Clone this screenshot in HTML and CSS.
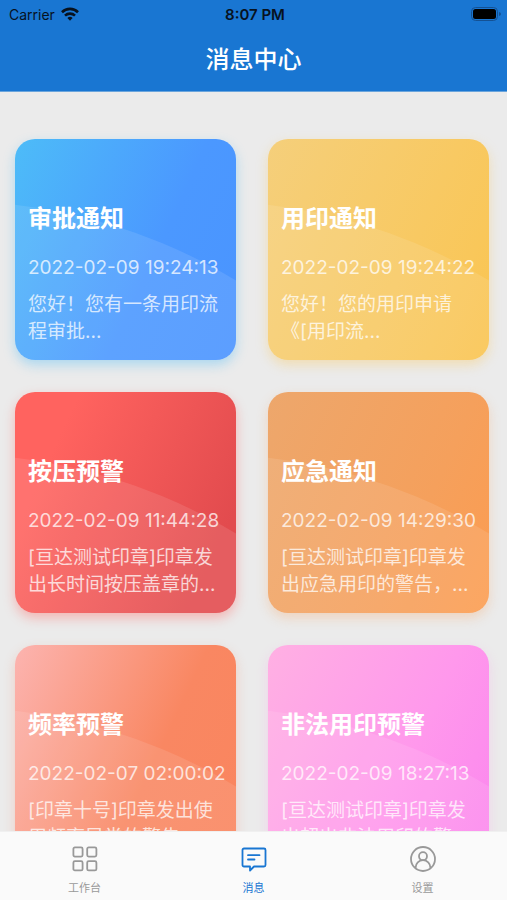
FILE: index.html
```html
<!DOCTYPE html>
<html lang="zh-CN">
<head>
    <meta charset="UTF-8">
    <meta name="viewport" content="width=device-width, initial-scale=1.0">
    <title>消息中心</title>
    <link rel="stylesheet" href="styles.css">
</head>
<body>
    <header class="header">
        <div class="status-bar">
            <div class="carrier">
                <span>Carrier</span>
                <svg class="wifi" viewBox="0 0 18 14" fill="none" stroke="#07121f" stroke-width="2.6">
                    <path d="M1 5.2a11.4 11.4 0 0 1 16 0"/>
                    <path d="M4 8.6a7.2 7.2 0 0 1 10 0"/>
                    <path d="M6.4 10.9a3.8 3.8 0 0 1 5.2 0L9 13.8z" fill="#07121f" stroke="none"/>
                </svg>
            </div>
            <time class="clock">8:07 PM</time>
            <svg class="battery" viewBox="0 0 30 14">
                <rect x="0.5" y="0.5" width="26" height="13" rx="4" fill="none" stroke="#145193"/>
                <rect x="2" y="2" width="23" height="10" rx="2.5" fill="#000"/>
                <path d="M28 5v4q2-.6 2-2t-2-2z" fill="#145193"/>
            </svg>
        </div>
        <h1 class="page-title">消息中心</h1>
    </header>

    <main class="content">
        <div class="card-grid">
            <a href="#" class="card card-blue">
                <h2 class="card-title">审批通知</h2>
                <time class="card-date">2022-02-09 19:24:13</time>
                <p class="card-text">您好！您有一条用印流程审批...</p>
            </a>
            <a href="#" class="card card-yellow">
                <h2 class="card-title">用印通知</h2>
                <time class="card-date">2022-02-09 19:24:22</time>
                <p class="card-text">您好！您的用印申请《[用印流...</p>
            </a>
            <a href="#" class="card card-red">
                <h2 class="card-title">按压预警</h2>
                <time class="card-date">2022-02-09 11:44:28</time>
                <p class="card-text">[亘达测试印章]印章发出长时间按压盖章的...</p>
            </a>
            <a href="#" class="card card-orange">
                <h2 class="card-title">应急通知</h2>
                <time class="card-date">2022-02-09 14:29:30</time>
                <p class="card-text">[亘达测试印章]印章发出应急用印的警告，...</p>
            </a>
            <a href="#" class="card card-coral">
                <h2 class="card-title">频率预警</h2>
                <time class="card-date">2022-02-07 02:00:02</time>
                <p class="card-text">[印章十号]印章发出使用频率异常的警告...</p>
            </a>
            <a href="#" class="card card-pink">
                <h2 class="card-title">非法用印预警</h2>
                <time class="card-date">2022-02-09 18:27:13</time>
                <p class="card-text">[亘达测试印章]印章发出超出非法用印的警...</p>
            </a>
        </div>
    </main>

    <nav class="tab-bar">
        <a href="#" class="tab">
            <svg class="tab-icon" viewBox="0 0 26 26" fill="none" stroke="currentColor" stroke-width="1.8">
                <rect x="1.4" y="1.4" width="9.2" height="9.2" rx="1.5"/>
                <rect x="15.2" y="1.4" width="9.2" height="9.2" rx="1.5"/>
                <rect x="1.4" y="15.2" width="9.2" height="9.2" rx="1.5"/>
                <rect x="15.2" y="15.2" width="9.2" height="9.2" rx="1.5"/>
            </svg>
            <span>工作台</span>
        </a>
        <a href="#" class="tab active">
            <svg class="tab-icon" viewBox="0 0 26 26" fill="none" stroke="currentColor" stroke-width="1.8" stroke-linejoin="round" stroke-linecap="round">
                <path d="M3 2.5h20a1.5 1.5 0 0 1 1.5 1.5v15a1.5 1.5 0 0 1-1.5 1.5H13l-4 4v-4H3A1.5 1.5 0 0 1 1.5 19V4A1.5 1.5 0 0 1 3 2.5z"/>
                <path d="M7 9.2h11.500M7 13.5h6.500"/>
            </svg>
            <span>消息</span>
        </a>
        <a href="#" class="tab">
            <svg class="tab-icon" viewBox="0 0 26 26" fill="none" stroke="currentColor" stroke-width="1.8">
                <circle cx="13" cy="13" r="12"/>
                <circle cx="13" cy="10.2" r="4"/>
                <path d="M5.6 22.2v-.6a7.4 7.4 0 0 1 14.8 0v.6"/>
            </svg>
            <span>设置</span>
        </a>
    </nav>
</body>
</html>
```
FILE: styles.css
```css
* {
    box-sizing: border-box;
}
body {
    font-family: Inter, "Noto Sans CJK SC", sans-serif;
    display: flex;
    flex-direction: column;
    height: 100vh;
    margin: 0;
    background-color: #ebebeb;
}
a {
    color: inherit;
    text-decoration: none;
}
h1, h2, p {
    margin: 0;
}

/* header */
.header {
    flex: none;
    background-color: #1976d2;
    border-bottom: 1px solid #6ba5dc;
}
.status-bar {
    display: grid;
    grid-template-columns: 1fr auto 1fr;
    align-items: center;
    height: 28px;
    padding: 0 6px 0 9px;
    font-size: 14px;
    color: #07121f;
}
.carrier {
    display: flex;
    align-items: center;
    gap: 6px;
}
.wifi {
    width: 18px;
    height: 14px;
}
.clock {
    font-size: 15px;
    font-weight: 600;
}
.battery {
    width: 30px;
    height: 14px;
    justify-self: end;
}
.page-title {
    padding-top: 1px;
    font-size: 24px;
    font-weight: 500;
    line-height: 62px;
    text-align: center;
    color: white;
}

/* message cards */
.content {
    flex: 1;
    min-height: 0;
    overflow: hidden;
}
.card-grid {
    display: grid;
    grid-template-columns: 1fr 1fr;
    gap: 32px;
    padding: 47px 18px 32px 15px;
}
.card {
    position: relative;
    aspect-ratio: 1;
    padding: 62px 13px 0;
    border-radius: 20px;
    overflow: hidden;
    color: white;
}
.card::before {
    content: "";
    position: absolute;
    top: 28%;
    left: -279%;
    width: 500%;
    height: 500%;
    border-radius: 50%;
    background-color: rgba(255, 255, 255, 0.1);
}
.card-title,
.card-date,
.card-text {
    position: relative;
}
.card-title {
    font-size: 24px;
    font-weight: 700;
    line-height: 36px;
}
.card-date {
    display: block;
    margin-top: 17px;
    font-size: 19px;
    font-weight: 400;
    line-height: 27px;
    white-space: nowrap;
    color: rgba(255, 255, 255, 0.75);
}
.card-text {
    margin-top: 10px;
    font-size: 19px;
    font-weight: 400;
    line-height: 27px;
    color: rgba(255, 255, 255, 0.75);
}
.card-blue {
    background: linear-gradient(115deg, #4dbcf8, #4b98ff 60%, #4a94ff);
    box-shadow: 0 5px 12px rgba(77, 188, 248, 0.4);
}
.card-yellow {
    background: linear-gradient(115deg, #f5cf7b, #f9c75a 80%, #fac44f);
    box-shadow: 0 5px 12px rgba(249, 200, 95, 0.4);
}
.card-red {
    background: linear-gradient(115deg, #ff635f 20%, #e24b4e 85%);
    box-shadow: 0 5px 12px rgba(255, 99, 95, 0.4);
}
.card-orange {
    background: linear-gradient(115deg, #eda76c, #f5a05c 65%, #fc9c50);
    box-shadow: 0 5px 12px rgba(249, 160, 90, 0.3);
}
.card-coral {
    background: linear-gradient(115deg, #fcb4b0, #f98762 60%, #fa855e);
    box-shadow: 0 5px 12px rgba(249, 135, 98, 0.3);
}
.card-pink {
    background: linear-gradient(115deg, #ffb0e3, #ff98ec 60%, #fb86ee);
    box-shadow: 0 5px 12px rgba(255, 152, 236, 0.3);
}

/* bottom tabs */
.tab-bar {
    flex: none;
    display: flex;
    height: 69px;
    background-color: #fafafa;
    border-top: 1px solid #f0f0f0;
}
.tab {
    flex: 1;
    display: flex;
    flex-direction: column;
    align-items: center;
    gap: 8px;
    padding-top: 14px;
    font-size: 11px;
    line-height: 16px;
    color: #999;
}
.tab.active {
    color: #1976d2;
}
.tab-icon {
    width: 26px;
    height: 26px;
}
```
